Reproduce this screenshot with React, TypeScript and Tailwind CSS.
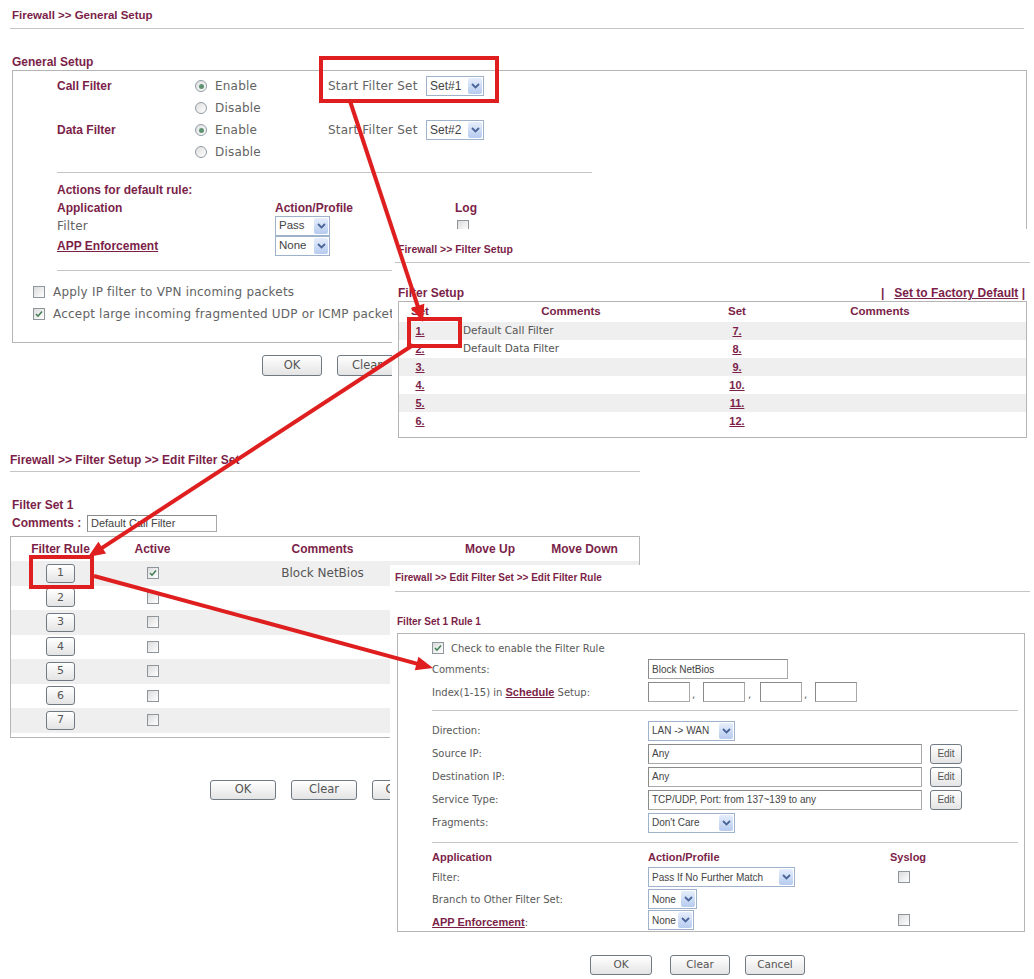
import React from "react";

const T = "font-['Liberation_Sans',Arial,sans-serif]";
const D = "font-['DejaVu_Sans',Verdana,sans-serif]";
const M = "text-[#7b1f49]";

function Chevron() {
  return (
    <span className="my-[1px] mr-[1px] flex w-[14px] shrink-0 items-center justify-center rounded-[2px] bg-gradient-to-b from-[#e6eefc] to-[#b6cbef]">
      <svg width="9" height="6" viewBox="0 0 9 6">
        <path d="M1 1 L4.5 4.5 L8 1" fill="none" stroke="#4a6699" strokeWidth="1.8" />
      </svg>
    </span>
  );
}

function Select({ text, cls, textCls }: { text: string; cls: string; textCls: string }) {
  return (
    <div className={`flex h-[20px] items-stretch border border-[#9fb2cc] bg-white ${cls}`}>
      <span className={`flex flex-1 items-center overflow-hidden whitespace-nowrap pl-[3px] text-[#444] ${textCls}`}>{text}</span>
      <Chevron />
    </div>
  );
}

function Check({ checked, cls = "" }: { checked?: boolean; cls?: string }) {
  return (
    <span className={`relative inline-block h-[12px] w-[12px] shrink-0 border border-[#8e969c] bg-gradient-to-br from-[#dcdcdc] to-white ${cls}`}>
      {checked && (
        <svg className="absolute left-[1px] top-[1px]" width="8" height="8" viewBox="0 0 8 8">
          <path d="M1 4 L3 6.2 L7 1.5" fill="none" stroke="#3f7d52" strokeWidth="1.5" />
        </svg>
      )}
    </span>
  );
}

function Radio({ checked }: { checked?: boolean }) {
  return (
    <span className="inline-flex h-[12px] w-[12px] shrink-0 items-center justify-center rounded-full border border-[#8f9ba5] bg-gradient-to-br from-[#dedede] to-white">
      {checked && <span className="h-[5px] w-[5px] rounded-full bg-[#5f9270]" />}
    </span>
  );
}

function Btn({ label, cls, textCls }: { label: string; cls: string; textCls: string }) {
  return (
    <div className={`flex items-center justify-center rounded-[3px] border border-[#707a84] bg-gradient-to-b from-white to-[#e4e4e4] text-[#555] ${cls} ${textCls}`}>
      {label}
    </div>
  );
}

function TextBox({ text, cls, textCls = "" }: { text?: string; cls: string; textCls?: string }) {
  return (
    <div className={`flex items-center border border-[#a9a9a9] border-t-[#8a8a8a] border-l-[#8a8a8a] bg-white pl-[3px] text-[#444] ${cls} ${textCls}`}>
      {text}
    </div>
  );
}

function Arrow({ x1, y1, x2, y2 }: { x1: number; y1: number; x2: number; y2: number }) {
  const dx = x2 - x1;
  const dy = y2 - y1;
  const len = Math.hypot(dx, dy);
  const ux = dx / len;
  const uy = dy / len;
  const L = 17;
  const W = 7;
  const bx = x2 - ux * L;
  const by = y2 - uy * L;
  const pts = `${x2},${y2} ${bx - uy * W},${by + ux * W} ${bx + uy * W},${by - ux * W}`;
  return (
    <g>
      <line x1={x1} y1={y1} x2={bx + ux * 2} y2={by + uy * 2} stroke="#df1f1f" strokeWidth="4" />
      <polygon points={pts} fill="#df1f1f" />
    </g>
  );
}

function Panel1() {
  const body = `${D} text-[12px] tracking-[0.2px] text-[#636363]`;
  const lab = `${T} text-[12px] font-bold ${M}`;
  return (
    <div className="absolute left-0 top-0 w-[1034px]">
      <div className={`mx-[10px] h-[29px] border-b border-[#c4c4c4] pl-[2px] pt-[8px] text-[11.5px] font-bold leading-[14px] ${M} ${T}`}>
        Firewall &gt;&gt; General Setup
      </div>
      <div className={`ml-[12px] mt-[25px] h-[16px] leading-[16px] ${lab}`}>General Setup</div>
      <div className="ml-[12px] h-[273px] w-[1015px] border border-[#b5b5b5] pt-[4px]">
        <div className="flex h-[22px] items-center pl-[44px]">
          <span className={`w-[138px] ${lab}`}>Call Filter</span>
          <span className={`flex w-[133px] items-center gap-[8px] ${body}`}><Radio checked />Enable</span>
          <span className={`w-[98px] whitespace-nowrap ${body}`}>Start Filter Set</span>
          <Select text="Set#1" cls="w-[58px]" textCls={`${T} text-[12px]`} />
        </div>
        <div className="flex h-[22px] items-center pl-[44px]">
          <span className="w-[138px]" />
          <span className={`flex w-[133px] items-center gap-[8px] ${body}`}><Radio />Disable</span>
        </div>
        <div className="flex h-[22px] items-center pl-[44px]">
          <span className={`w-[138px] ${lab}`}>Data Filter</span>
          <span className={`flex w-[133px] items-center gap-[8px] ${body}`}><Radio checked />Enable</span>
          <span className={`w-[98px] whitespace-nowrap ${body}`}>Start Filter Set</span>
          <Select text="Set#2" cls="w-[58px]" textCls={`${T} text-[12px]`} />
        </div>
        <div className="flex h-[22px] items-center pl-[44px]">
          <span className="w-[138px]" />
          <span className={`flex w-[133px] items-center gap-[8px] ${body}`}><Radio />Disable</span>
        </div>
        <div className="ml-[44px] mt-[9px] w-[535px] border-t border-[#c4c4c4]" />
        <div className="mt-[7px] pl-[44px]">
          <div className={`flex h-[19px] items-center ${lab}`}>Actions for default rule:</div>
          <div className={`flex h-[17px] items-center ${lab}`}>
            <span className="w-[218px]">Application</span>
            <span className="w-[180px]">Action/Profile</span>
            <span>Log</span>
          </div>
          <div className="flex h-[20px] items-center">
            <span className={`w-[218px] ${body}`}>Filter</span>
            <span className="w-[180px]"><Select text="Pass" cls="w-[55px] h-[19px]" textCls={`${T} text-[11.5px]`} /></span>
            <Check cls="ml-[2px]" />
          </div>
          <div className="flex h-[20px] items-center">
            <span className={`w-[218px] ${lab} underline`}>APP Enforcement</span>
            <span className="w-[180px]"><Select text="None" cls="w-[55px] h-[19px]" textCls={`${T} text-[11.5px]`} /></span>
          </div>
        </div>
        <div className="ml-[44px] mt-[14px] w-[535px] border-t border-[#c4c4c4]" />
        <div className="mt-[10px] pl-[20px]">
          <div className={`flex h-[22px] items-center gap-[8px] whitespace-nowrap ${body}`}><Check />Apply IP filter to VPN incoming packets</div>
          <div className={`flex h-[22px] items-center gap-[8px] whitespace-nowrap ${body}`}><Check checked />Accept large incoming fragmented UDP or ICMP packets</div>
        </div>
      </div>
      <div className="mt-[12px] flex gap-[15px] pl-[262px]">
        <Btn label="OK" cls="h-[21px] w-[60px]" textCls={`${D} text-[11.5px]`} />
        <Btn label="Clear" cls="h-[21px] w-[60px]" textCls={`${D} text-[11.5px]`} />
      </div>
    </div>
  );
}

function Panel2() {
  const link = `${T} text-[11px] font-bold underline ${M}`;
  const hdr = `${T} text-[11.5px] font-bold ${M}`;
  const rows = [
    ["1.", "Default Call Filter", "7."],
    ["2.", "Default Data Filter", "8."],
    ["3.", "", "9."],
    ["4.", "", "10."],
    ["5.", "", "11."],
    ["6.", "", "12."],
  ];
  return (
    <div className="absolute left-[392px] top-[229px] h-[216px] w-[642px] bg-white">
      <div className={`ml-[3px] mr-[4px] h-[34px] border-b border-[#c4c4c4] pl-[3px] pt-[13px] text-[10.5px] font-bold leading-[14px] ${M} ${T}`}>
        Firewall &gt;&gt; Filter Setup
      </div>
      <div className="ml-[6px] mr-[9px] mt-[22px] flex h-[16px] items-center justify-between">
        <span className={`${T} text-[12px] font-bold ${M}`}>Filter Setup</span>
        <span className={`${T} text-[12px] font-bold ${M} whitespace-pre`}>|   <span className="underline">Set to Factory Default</span> |</span>
      </div>
      <div className="ml-[6px] h-[137px] w-[629px] border border-[#b5b5b5]">
        <div className={`grid h-[20px] grid-cols-[42px_260px_72px_214px_1fr] items-center ${hdr}`}>
          <span className="text-center">Set</span>
          <span className="text-center">Comments</span>
          <span className="text-center">Set</span>
          <span className="text-center">Comments</span>
          <span />
        </div>
        {rows.map((r, i) => (
          <div key={i} className={`grid h-[18px] grid-cols-[42px_260px_72px_214px_1fr] items-center ${i % 2 === 0 ? "bg-[#efefef]" : "bg-white"}`}>
            <span className={`text-center ${link}`}>{r[0]}</span>
            <span className={`pl-[22px] ${D} text-[10.5px] text-[#555]`}>{r[1]}</span>
            <span className={`text-center ${link}`}>{r[2]}</span>
            <span />
            <span />
          </div>
        ))}
      </div>
    </div>
  );
}

function Panel3() {
  const hdr = `${T} text-[12px] font-bold ${M}`;
  return (
    <div className="absolute left-0 top-[445px] h-[380px] w-[642px] bg-white">
      <div className={`ml-[10px] h-[27px] w-[630px] border-b border-[#c4c4c4] pt-[8px] text-[12px] font-bold leading-[14px] ${M} ${T}`}>
        Firewall &gt;&gt; Filter Setup &gt;&gt; Edit Filter Set
      </div>
      <div className={`ml-[12px] mt-[25px] h-[16px] leading-[16px] ${hdr}`}>Filter Set 1</div>
      <div className="ml-[12px] flex h-[20px] items-center">
        <span className={`w-[75px] ${hdr}`}>Comments :</span>
        <TextBox text="Default Call Filter" cls="h-[17px] w-[130px]" textCls={`${T} text-[11px]`} />
      </div>
      <div className="ml-[10px] mt-[3px] w-[630px] border border-[#b5b5b5] pb-[4px]">
        <div className={`grid h-[24px] grid-cols-[99px_85px_255px_80px_1fr] items-center ${hdr}`}>
          <span className="text-center">Filter Rule</span>
          <span className="text-center">Active</span>
          <span className="text-center">Comments</span>
          <span className="text-center">Move Up</span>
          <span className="text-center">Move Down</span>
        </div>
        {[1, 2, 3, 4, 5, 6, 7].map((n, i) => (
          <div key={n} className={`grid h-[24.5px] grid-cols-[99px_85px_255px_80px_1fr] items-center ${i % 2 === 0 ? "bg-[#efefef]" : "bg-white"}`}>
            <span className="flex justify-center">
              <Btn label={String(n)} cls="h-[19px] w-[29px] border-[#5b6670]" textCls={`${D} text-[11px]`} />
            </span>
            <span className="flex justify-center">
              <Check checked={n === 1} />
            </span>
            <span className={`text-center ${D} text-[12px] text-[#555]`}>{n === 1 ? "Block NetBios" : ""}</span>
            <span />
            <span />
          </div>
        ))}
      </div>
      <div className="mt-[42px] flex gap-[15px] pl-[210px]">
        <Btn label="OK" cls="h-[20px] w-[66px]" textCls={`${D} text-[11.5px]`} />
        <Btn label="Clear" cls="h-[20px] w-[66px]" textCls={`${D} text-[11.5px]`} />
        <Btn label="Cancel" cls="h-[20px] w-[66px]" textCls={`${D} text-[11.5px]`} />
      </div>
    </div>
  );
}

function Panel4() {
  const lab = `${D} text-[10px] text-[#5a5a5a]`;
  const hdr = `${T} text-[11px] font-bold ${M}`;
  const inp = `${T} text-[10px]`;
  return (
    <div className="absolute left-[390px] top-[565px] h-[414px] w-[644px] bg-white">
      <div className={`ml-[5px] mr-[4px] h-[27px] border-b border-[#c4c4c4] pt-[6px] text-[10px] font-bold leading-[14px] ${M} ${T}`}>
        Firewall &gt;&gt; Edit Filter Set &gt;&gt; Edit Filter Rule
      </div>
      <div className={`ml-[7px] mt-[22px] h-[16px] text-[10px] leading-[16px] font-bold ${M} ${T}`}>Filter Set 1 Rule 1</div>
      <div className="ml-[7px] mt-[3px] h-[299px] w-[628px] border border-[#b5b5b5] pl-[34px] pt-[4px]">
        <div className={`flex h-[20px] items-center gap-[7px] ${lab}`}>
          <Check checked />
          Check to enable the Filter Rule
        </div>
        <div className="flex h-[22px] items-center">
          <span className={`w-[216px] ${lab}`}>Comments:</span>
          <TextBox text="Block NetBios" cls="h-[20px] w-[140px]" textCls={inp} />
        </div>
        <div className="flex h-[24px] items-center">
          <span className={`w-[216px] ${lab}`}>
            Index(1-15) in <span className={`${T} text-[11px] font-bold underline ${M}`}>Schedule</span> Setup:
          </span>
          <TextBox cls="h-[20px] w-[42px]" />
          <span className={`flex h-[20px] w-[13px] items-end pl-[2px] ${lab}`}>,</span>
          <TextBox cls="h-[20px] w-[42px]" />
          <span className={`flex h-[20px] w-[15px] items-end pl-[3px] ${lab}`}>,</span>
          <TextBox cls="h-[20px] w-[42px]" />
          <span className={`flex h-[20px] w-[13px] items-end pl-[2px] ${lab}`}>,</span>
          <TextBox cls="h-[20px] w-[42px]" />
        </div>
        <div className="mt-[6px] w-[586px] border-t border-[#c4c4c4]" />
        <div className="mt-[8px]">
          <div className="flex h-[23px] items-center">
            <span className={`w-[216px] ${lab}`}>Direction:</span>
            <Select text="LAN -> WAN" cls="w-[87px] h-[19px]" textCls={inp} />
          </div>
          {[
            ["Source IP:", "Any"],
            ["Destination IP:", "Any"],
            ["Service Type:", "TCP/UDP, Port: from 137~139 to any"],
          ].map((r) => (
            <div key={r[0]} className="flex h-[23px] items-center">
              <span className={`w-[216px] ${lab}`}>{r[0]}</span>
              <TextBox text={r[1]} cls="h-[20px] w-[274px]" textCls={inp} />
              <Btn label="Edit" cls="ml-[8px] h-[20px] w-[32px] rounded-[2px]" textCls={inp} />
            </div>
          ))}
          <div className="flex h-[23px] items-center">
            <span className={`w-[216px] ${lab}`}>Fragments:</span>
            <Select text="Don't Care" cls="w-[87px] h-[19px]" textCls={inp} />
          </div>
        </div>
        <div className="mt-[8px] w-[586px] border-t border-[#c4c4c4]" />
        <div className={`mt-[5px] flex h-[18px] items-center ${hdr}`}>
          <span className="w-[216px]">Application</span>
          <span className="w-[242px]">Action/Profile</span>
          <span>Syslog</span>
        </div>
        <div className="flex h-[22px] items-center">
          <span className={`w-[216px] ${lab}`}>Filter:</span>
          <span className="w-[242px]"><Select text="Pass If No Further Match" cls="w-[147px] h-[20px]" textCls={inp} /></span>
          <Check cls="ml-[8px]" />
        </div>
        <div className="flex h-[22px] items-center">
          <span className={`w-[216px] ${lab}`}>Branch to Other Filter Set:</span>
          <Select text="None" cls="w-[49px] h-[20px]" textCls={inp} />
        </div>
        <div className="flex h-[20px] items-center">
          <span className="w-[216px]">
            <span className={`${hdr} underline`}>APP Enforcement</span>
            <span className={lab}>:</span>
          </span>
          <span className="w-[242px]"><Select text="None" cls="w-[46px] h-[20px]" textCls={inp} /></span>
          <Check cls="ml-[8px]" />
        </div>
      </div>
      <div className="mt-[23px] flex pl-[200px]">
        <Btn label="OK" cls="h-[20px] w-[62px]" textCls={`${D} text-[10.5px]`} />
        <Btn label="Clear" cls="ml-[18px] h-[20px] w-[60px]" textCls={`${D} text-[10.5px]`} />
        <Btn label="Cancel" cls="ml-[15px] h-[20px] w-[60px]" textCls={`${D} text-[10.5px]`} />
      </div>
    </div>
  );
}

export default function App() {
  return (
    <div className="relative h-[979px] w-[1034px] overflow-hidden bg-white">
      <Panel1 />
      <Panel2 />
      <Panel3 />
      <Panel4 />
      <svg className="pointer-events-none absolute left-0 top-0" width="1034" height="979" viewBox="0 0 1034 979">
        <rect x="321" y="58" width="176" height="43" fill="none" stroke="#df1f1f" strokeWidth="4" />
        <rect x="409" y="319" width="51" height="27" fill="none" stroke="#df1f1f" strokeWidth="4" />
        <rect x="31" y="557" width="61" height="30" fill="none" stroke="#df1f1f" strokeWidth="4" />
        <Arrow x1={350} y1={101} x2={423} y2={322} />
        <Arrow x1={413} y1={345} x2={88} y2={557} />
        <Arrow x1={94} y1={576} x2={433} y2={668} />
      </svg>
    </div>
  );
}
